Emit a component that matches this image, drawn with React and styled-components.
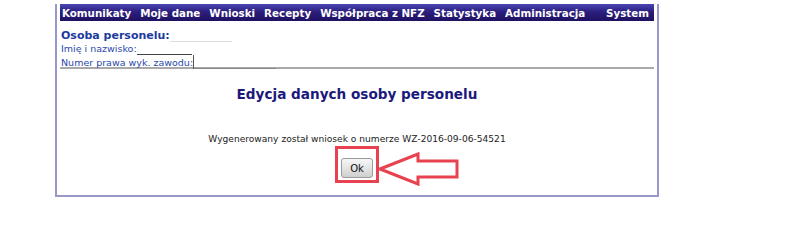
import React from "react";
import styled, { createGlobalStyle } from "styled-components";

const GlobalStyle = createGlobalStyle`
  body {
    margin: 0;
    background: #fff;
    font-family: "DejaVu Sans", Verdana, sans-serif;
  }
`;

const Page = styled.div`
  padding-left: 55px;
`;

const Frame = styled.div`
  width: 600px;
  height: 191px;
  border: 2px solid #9797c9;
  border-top: none;
  background: #fff;
`;

const NavBar = styled.nav`
  display: flex;
  align-items: center;
  height: 17px;
  margin: 4px 3px 0;
  padding: 0 5px 0 2px;
  gap: 9px;
  background: linear-gradient(180deg, #4a48b4 0%, #2c1f7e 45%, #1f1160 100%);
`;

const NavItem = styled.span`
  color: #fff;
  font-size: 10.3px;
  font-weight: bold;
  white-space: nowrap;
  margin-left: ${({ $right }) => ($right ? "auto" : "0")};
`;

const Person = styled.div`
  padding: 9px 4px 0;
  height: 37px;
`;

const PersonHeading = styled.div`
  display: flex;
  align-items: flex-end;
  color: #1d3b9e;
  font-size: 11px;
  font-weight: bold;
  line-height: 12px;
`;

const Blank = styled.span`
  display: inline-block;
  width: ${({ $w }) => $w}px;
  height: ${({ $h }) => $h || 1}px;
  border-bottom: 1px solid ${({ $c }) => $c || "#ddd"};
  border-left: ${({ $boxed }) => ($boxed ? "1px solid #555" : "none")};
`;

const InfoRow = styled.div`
  display: flex;
  align-items: flex-end;
  color: #2a48ac;
  font-size: 9.5px;
  line-height: 13px;
`;

const Separator = styled.div`
  height: 2px;
  margin: 0 3px;
  background: #a9a9a9;
`;

const Content = styled.div`
  display: flex;
  flex-direction: column;
  align-items: center;
`;

const Title = styled.h1`
  margin: 16px 0 0;
  color: #1b1a7c;
  font-size: 13.6px;
  font-weight: bold;
  line-height: 18px;
`;

const Message = styled.p`
  margin: 30px 0 0;
  color: #222;
  font-size: 9.1px;
  line-height: 12px;
`;

const Highlight = styled.div`
  position: relative;
  margin-top: 1px;
  padding: 9px 3px 2px;
  border: 3px solid #e8414f;
`;

const OkButton = styled.button`
  display: block;
  width: 32px;
  height: 20px;
  padding: 0;
  border: 1px solid #9a9a9a;
  border-radius: 3px;
  background: linear-gradient(180deg, #f7f7f7 0%, #e2e2e2 55%, #cfcfcf 100%);
  color: #111;
  font-family: "DejaVu Sans", Verdana, sans-serif;
  font-size: 10px;
`;

const Arrow = styled.svg`
  position: absolute;
  left: 100%;
  top: 2px;
  margin-left: 1px;
`;

const navItems = [
  "Komunikaty",
  "Moje dane",
  "Wnioski",
  "Recepty",
  "Współpraca z NFZ",
  "Statystyka",
  "Administracja",
];

const App = () => {
  return (
    <Page>
      <GlobalStyle />
      <Frame>
        <NavBar>
          {navItems.map((item) => (
            <NavItem key={item}>{item}</NavItem>
          ))}
          <NavItem $right>System</NavItem>
        </NavBar>
        <Person>
          <PersonHeading>
            Osoba personelu:
            <Blank $w={62} />
          </PersonHeading>
          <InfoRow>
            Imię i nazwisko:
            <Blank $w={55} $c="#444" />
          </InfoRow>
          <InfoRow>
            Numer prawa wyk. zawodu:
            <Blank $w={82} $h={13} $c="#888" $boxed />
          </InfoRow>
        </Person>
        <Separator />
        <Content>
          <Title>Edycja danych osoby personelu</Title>
          <Message>
            Wygenerowany został wniosek o numerze WZ-2016-09-06-54521
          </Message>
          <Highlight>
            <OkButton type="button">Ok</OkButton>
            <Arrow width="84" height="36" viewBox="0 0 84 36">
              <path
                d="M3 18 L41 3 L41 10 L80 10 L80 26 L41 26 L41 33 Z"
                fill="none"
                stroke="#e8414f"
                strokeWidth="3"
                strokeLinejoin="miter"
              />
            </Arrow>
          </Highlight>
        </Content>
      </Frame>
    </Page>
  );
};

export default App;
